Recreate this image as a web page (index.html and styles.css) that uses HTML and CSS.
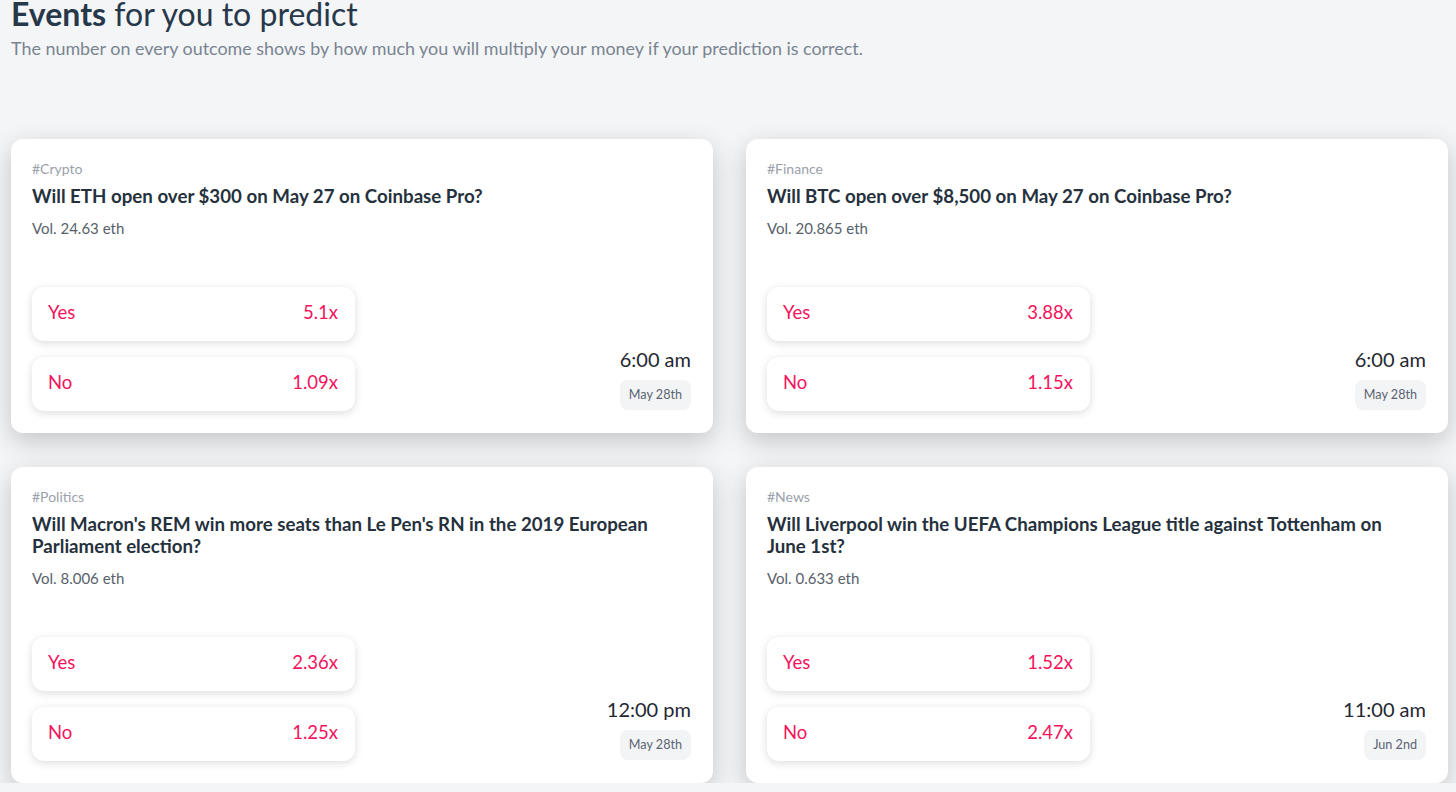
FILE: index.html
```html
<!DOCTYPE html>
<html>
<head>
<meta charset="utf-8">
<link rel="stylesheet" href="styles.css">
</head>
<body>
<header class="head">
  <h1 class="title"><strong>Events</strong> for you to predict</h1>
  <p class="sub">The number on every outcome shows by how much you will multiply your money if your prediction is correct.</p>
</header>
<main class="grid">
  <section class="card">
    <div class="tag">#Crypto</div>
    <h2 class="q">Will ETH open over $300 on May 27 on Coinbase Pro?</h2>
    <div class="vol">Vol. 24.63 eth</div>
    <div class="bottom">
      <div class="opts">
        <button class="opt"><span>Yes</span><span>5.1x</span></button>
        <button class="opt"><span>No</span><span>1.09x</span></button>
      </div>
      <div class="when"><div class="time">6:00 am</div><div class="date">May 28th</div></div>
    </div>
  </section>
  <section class="card">
    <div class="tag">#Finance</div>
    <h2 class="q">Will BTC open over $8,500 on May 27 on Coinbase Pro?</h2>
    <div class="vol">Vol. 20.865 eth</div>
    <div class="bottom">
      <div class="opts">
        <button class="opt"><span>Yes</span><span>3.88x</span></button>
        <button class="opt"><span>No</span><span>1.15x</span></button>
      </div>
      <div class="when"><div class="time">6:00 am</div><div class="date">May 28th</div></div>
    </div>
  </section>
  <section class="card">
    <div class="tag">#Politics</div>
    <h2 class="q">Will Macron's REM win more seats than Le Pen's RN in the 2019 European Parliament election?</h2>
    <div class="vol">Vol. 8.006 eth</div>
    <div class="bottom">
      <div class="opts">
        <button class="opt"><span>Yes</span><span>2.36x</span></button>
        <button class="opt"><span>No</span><span>1.25x</span></button>
      </div>
      <div class="when"><div class="time">12:00 pm</div><div class="date">May 28th</div></div>
    </div>
  </section>
  <section class="card">
    <div class="tag">#News</div>
    <h2 class="q">Will Liverpool win the UEFA Champions League title against Tottenham on June 1st?</h2>
    <div class="vol">Vol. 0.633 eth</div>
    <div class="bottom">
      <div class="opts">
        <button class="opt"><span>Yes</span><span>1.52x</span></button>
        <button class="opt"><span>No</span><span>2.47x</span></button>
      </div>
      <div class="when"><div class="time">11:00 am</div><div class="date">Jun 2nd</div></div>
    </div>
  </section>
</main>
</body>
</html>
```
FILE: styles.css
```css
* { box-sizing: border-box; }
html, body { margin: 0; padding: 0; }
body {
  background: #f4f5f7;
  font-family: Lato, "Liberation Sans", sans-serif;
  color: #2b3a48;
  overflow: hidden;
}
.head { padding: 0 0 0 11px; }
.title {
  margin: 0;
  font-size: 32px;
  line-height: 28px;
  font-weight: 400;
  color: #27384a;
}
.title strong { font-weight: 700; }
.sub {
  margin: 8px 0 0 0;
  font-size: 17.9px;
  line-height: 24px;
  color: #7a8491;
  font-weight: 400;
}
.grid {
  display: grid;
  grid-template-columns: 702px 702px;
  column-gap: 33px;
  row-gap: 34px;
  padding: 79px 8px 0 11px;
  align-items: start;
}
.card {
  background: #fff;
  border-radius: 12px;
  box-shadow: 0 8px 26px rgba(0,0,0,0.2);
  padding: 20px 22px 22px 21px;
}
.tag {
  font-size: 14px;
  line-height: 20px;
  color: #9aa1aa;
}
.q {
  margin: 6px 0 0 0;
  max-width: 630px;
  font-size: 18.7px;
  line-height: 22px;
  font-weight: 700;
  color: #25313d;
}
.vol {
  margin-top: 11px;
  font-size: 15px;
  line-height: 20px;
  color: #58616b;
}
.bottom {
  margin-top: 49px;
  display: flex;
  justify-content: space-between;
  align-items: flex-end;
}
.opts {
  display: flex;
  flex-direction: column;
  gap: 16px;
}
.opt {
  width: 323px;
  height: 54px;
  border: none;
  background: #fff;
  border-radius: 12px;
  box-shadow: 0 2px 9px rgba(0,0,0,0.14);
  display: flex;
  justify-content: space-between;
  align-items: center;
  padding: 0 17px 4px 16px;
  font-family: inherit;
  font-size: 18.5px;
  color: #f5135c;
}
.when {
  display: flex;
  flex-direction: column;
  align-items: flex-end;
  gap: 7px;
}
.time {
  font-size: 20px;
  line-height: 28px;
  color: #1f2833;
}
.date {
  background: #f3f4f6;
  border-radius: 8px;
  padding: 0 9px;
  height: 30px;
  line-height: 30px;
  font-size: 12.6px;
  color: #5a6372;
  margin-bottom: 1px;
}
```
